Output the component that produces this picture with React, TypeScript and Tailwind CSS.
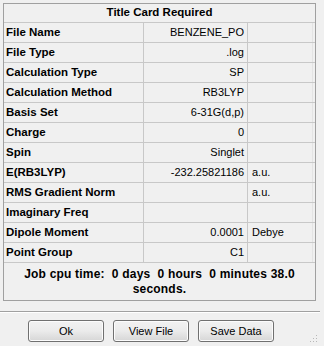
import React from "react";

const rows: [string, string, string][] = [
  ["File Name", "BENZENE_PO", ""],
  ["File Type", ".log", ""],
  ["Calculation Type", "SP", ""],
  ["Calculation Method", "RB3LYP", ""],
  ["Basis Set", "6-31G(d,p)", ""],
  ["Charge", "0", ""],
  ["Spin", "Singlet", ""],
  ["E(RB3LYP)", "-232.25821186", "a.u."],
  ["RMS Gradient Norm", "", "a.u."],
  ["Imaginary Freq", "", ""],
  ["Dipole Moment", "0.0001", "Debye"],
  ["Point Group", "C1", ""],
];

function Btn({ label }: { label: string }) {
  return (
    <button className="w-[76px] h-[22px] rounded-[3px] border border-[#707070] bg-gradient-to-b from-[#f2f2f2] via-[#ebebeb] to-[#d6d6d6] text-[11px] text-black leading-none shadow-[inset_0_0_0_1px_#fcfcfc]">
      {label}
    </button>
  );
}

export default function App() {
  return (
    <div
      className="w-[324px] h-[346px] bg-[#f0f0f0] relative overflow-hidden text-black"
      style={{ fontFamily: '"Liberation Sans", Arial, sans-serif' }}
    >
      <div className="pt-[3px] pl-[3px]">
        <div className="w-[313px] border border-[#a0a0a0] bg-[#f0f0f0]">
          <div className="h-[19px] flex items-center justify-center font-bold text-[11.5px] border-b border-[#c8c8c8]">
            Title Card Required
          </div>
          {rows.map(([l, v, u]) => (
            <div key={l} className="flex h-[20px] border-b border-[#c8c8c8] text-[11px]">
              <div className="w-[140px] border-r border-[#c8c8c8] font-bold text-[11.5px] pl-[2px] flex items-center">
                {l}
              </div>
              <div className="w-[104px] border-r border-[#c8c8c8] pr-[3px] flex items-center justify-end">
                {v}
              </div>
              <div className="flex-1 pl-[4px] flex items-center border-r border-[#e4e4e4]">{u}</div>
              <div className="w-[2px]" />
            </div>
          ))}
          <div className="h-[37px] flex flex-col items-center justify-center font-bold text-[12px] tracking-[0.2px] leading-[15px] whitespace-pre">
            <div>{"Job cpu time:  0 days  0 hours  0 minutes 38.0"}</div>
            <div>seconds.</div>
          </div>
        </div>
      </div>
      <div className="mt-[10px] h-[2px] w-[320px] border-t border-[#a0a0a0] border-b border-b-white" />
      <div className="flex mt-[7px] pl-[28px] gap-[9px]">
        <Btn label="Ok" />
        <Btn label="View File" />
        <Btn label="Save Data" />
      </div>
      <svg className="absolute right-[6px] bottom-[3px]" width="10" height="10" viewBox="0 0 10 10">
        {[
          [8, 2],
          [5, 5],
          [8, 5],
          [2, 8],
          [5, 8],
          [8, 8],
        ].map(([x, y], i) => (
          <rect key={i} x={x} y={y} width="1" height="1" fill="#b8b8b8" />
        ))}
      </svg>
    </div>
  );
}
